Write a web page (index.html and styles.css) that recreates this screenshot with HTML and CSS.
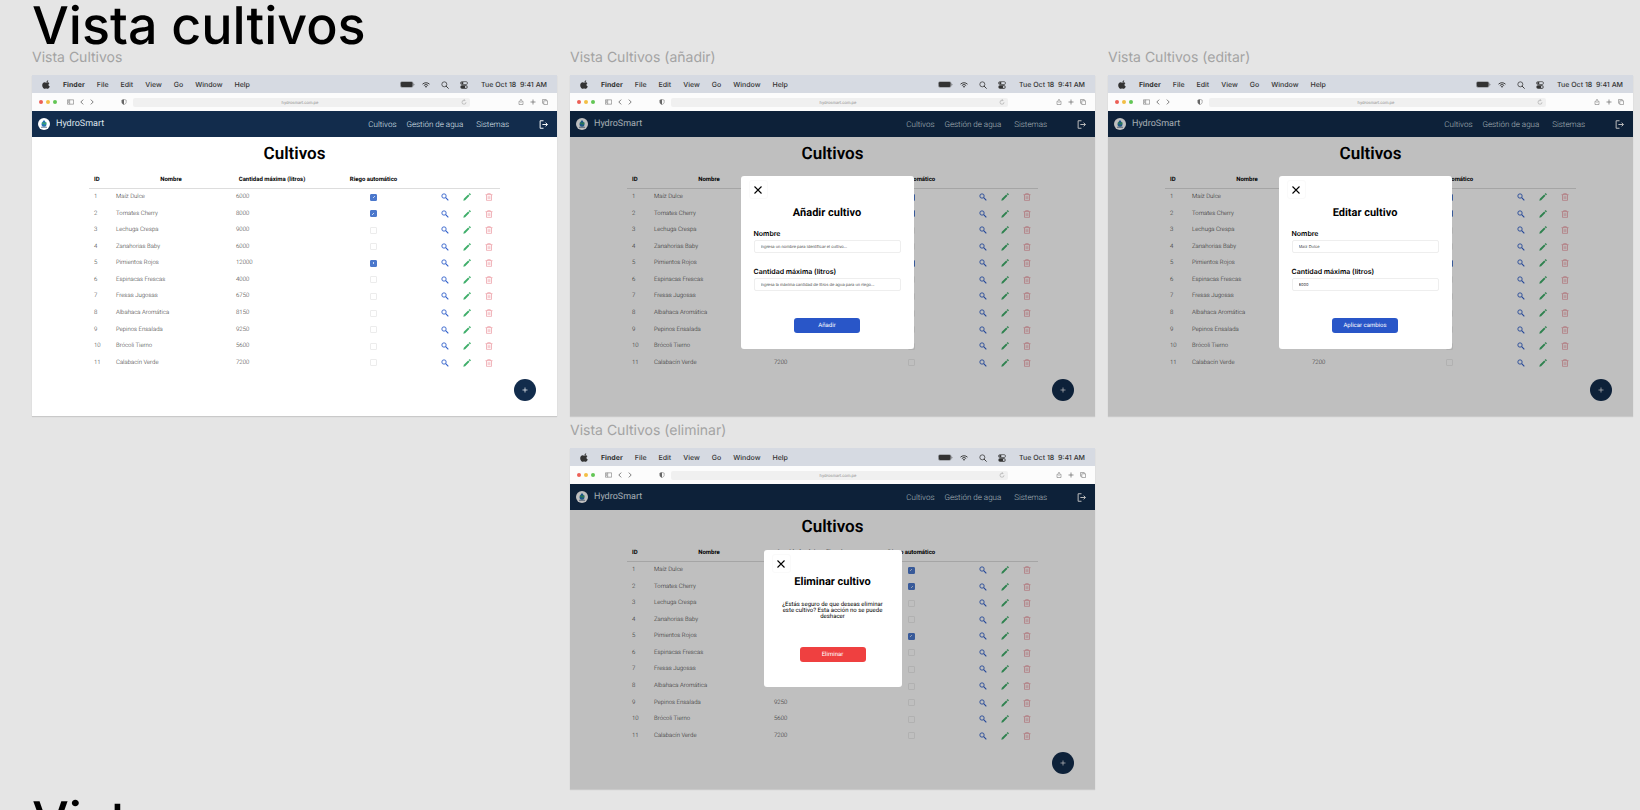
FILE: index.html
```html
<!DOCTYPE html>
<html lang="es">
<head>
<meta charset="utf-8">
<meta name="viewport" content="width=device-width, initial-scale=1">
<title>Vista cultivos</title>
<link rel="stylesheet" href="styles.css">
<script src="app.js" defer></script>
</head>
<body>
<svg class="sprite" aria-hidden="true">
  <symbol id="i-apple" viewBox="0 0 24 24"><path d="M16.500 .5c.2 1.600-.4 3-1.300 4-.9 1.100-2.200 1.800-3.500 1.700-.2-1.500.5-2.900 1.400-3.800 .9-1.100 2.300-1.800 3.400-1.900zM21 17.200c-.6 1.300-.9 1.900-1.600 3-1.100 1.600-2.500 3.300-4.300 3.300-1.600 0-2-1-4.200-1s-2.700 1-4.300 1c-1.800 0-3.100-1.700-4.200-3.300C0 16 .1 10.900 2.300 8.600c1.300-1.500 3-2.300 4.700-2.300 1.700 0 2.800 1 4.300 1 1.400 0 2.200-1 4.200-1 1.500 0 3.100.8 4.200 2.200-3.700 2-3.100 7.300 1.300 8.700z"/></symbol>
  <symbol id="i-battery" viewBox="0 0 28 12"><rect x=".7" y=".7" width="23.600" height="10.600" rx="3" fill="none" stroke="currentColor" stroke-opacity=".6"/><rect x="1.500" y="1.500" width="22" height="9" rx="2"/><path d="M25.500 4v4c1.600-.5 1.600-3.500 0-4z"/></symbol>
  <symbol id="i-wifi" viewBox="0 0 24 18"><path d="M1.500 6.500a15 15 0 0 1 21 0M5.500 10.500a9.300 9.300 0 0 1 13 0" fill="none" stroke="currentColor" stroke-width="2.800"/><path d="M12 17.500l-3.500-3.800a5 5 0 0 1 7 0z"/></symbol>
  <symbol id="i-find" viewBox="0 0 24 24"><circle cx="10" cy="10" r="7.500" fill="none" stroke="currentColor" stroke-width="2.200"/><path d="M15.500 15.500L22 22" stroke="currentColor" stroke-width="2.800" stroke-linecap="round"/></symbol>
  <symbol id="i-control" viewBox="0 0 24 24"><rect x="1.500" y="2" width="21" height="8.500" rx="4.200" fill="none" stroke="currentColor" stroke-width="2"/><circle cx="7" cy="6.200" r="3.500"/><rect x="1" y="13" width="22" height="10" rx="5"/><circle cx="17.500" cy="18" r="2.800" fill="#d6dae2"/></symbol>
  <symbol id="i-sidebar" viewBox="0 0 24 18"><path d="M1.500 1.500h21v15h-21zM9 1.500v15M4 5h3M4 8h3M4 11h3" fill="none" stroke="currentColor" stroke-width="1.800"/></symbol>
  <symbol id="i-back" viewBox="0 0 12 20"><path d="M10 2L2 10l8 8" fill="none" stroke="currentColor" stroke-width="2.800"/></symbol>
  <symbol id="i-next" viewBox="0 0 12 20"><path d="M2 2l8 8-8 8" fill="none" stroke="currentColor" stroke-width="2.800"/></symbol>
  <symbol id="i-shield" viewBox="0 0 20 22"><path d="M10 1.500L18 4v8c0 4-4 7-8 8.500C6 19 2 16 2 12V4z" fill="none" stroke="currentColor" stroke-width="1.800"/><path d="M10 1.500v19C6 19 2 16 2 12V4z"/></symbol>
  <symbol id="i-reload" viewBox="0 0 24 24"><path d="M20 13a8 8 0 1 1-8-8h3M12 1l4 4-4 4" fill="none" stroke="currentColor" stroke-width="1.800"/></symbol>
  <symbol id="i-share" viewBox="0 0 22 24"><path d="M7 9H3v13h16V9h-4M11 16V2M6.500 6L11 1.700 15.500 6" fill="none" stroke="currentColor" stroke-width="2"/></symbol>
  <symbol id="i-plus" viewBox="0 0 24 24"><path d="M12 2v20M2 12h20" stroke="currentColor" stroke-width="2.800"/></symbol>
  <symbol id="i-tabs" viewBox="0 0 24 24"><path d="M7 7h15v15H7zM7 17H2V2h15v5" fill="none" stroke="currentColor" stroke-width="2"/></symbol>
  <symbol id="i-logo" viewBox="0 0 24 24"><circle cx="12" cy="12" r="12" fill="#fff"/><path d="M12 4c3 4 5 6 5 8.500a5 5 0 0 1-10 0C7 10 9 8 12 4z" fill="#2674b5"/><path d="M12 13c0-3 2-5 5-4 .5 3-2 5-5 4zM12 12c0-2-2-4-4.500-3 0 2 2 4 4.500 3z" fill="#3aa56b"/><path d="M6 18.500h12" stroke="#1d3557" stroke-width="1.200"/></symbol>
  <symbol id="i-logout" viewBox="0 0 24 24"><path d="M12 2H3v20h9M9 12h13M17.500 7l5 5-5 5" fill="none" stroke="currentColor" stroke-width="2.600"/></symbol>
  <symbol id="i-search" viewBox="0 0 24 24"><circle cx="9" cy="9" r="6.500" fill="none" stroke="currentColor" stroke-width="2.600"/><path d="M14 14l8 8" stroke="currentColor" stroke-width="3.200"/></symbol>
  <symbol id="i-pencil" viewBox="0 0 24 24"><path d="M1 23l1.500-5.500L15.500 4.500 19.500 8.500 6.500 21.500zM17 3L19 .8c1.500-1.200 5.500 2.700 4.200 4.200L21 7z"/></symbol>
  <symbol id="i-trash" viewBox="0 0 24 24"><path d="M1.500 5h21M8 5V2h8v3M4.500 5.500V22h15V5.500M9.500 9.500v8.500M14.500 9.500v8.500" fill="none" stroke="currentColor" stroke-width="2.200"/></symbol>
  <symbol id="i-close" viewBox="0 0 16 16"><path d="M1 1l14 14M15 1L1 15" stroke="currentColor" stroke-width="2.200"/></symbol>
</svg>

<template id="screen">
  <div class="menubar">
    <svg class="ic ic-apple"><use href="#i-apple"/></svg>
    <b>Finder</b><span>File</span><span>Edit</span><span>View</span><span>Go</span><span>Window</span><span>Help</span>
    <div class="menubar-status">
      <svg class="ic ic-battery"><use href="#i-battery"/></svg>
      <svg class="ic ic-status"><use href="#i-wifi"/></svg>
      <svg class="ic ic-status"><use href="#i-find"/></svg>
      <svg class="ic ic-status"><use href="#i-control"/></svg>
      <time>Tue Oct 18&nbsp; 9:41 AM</time>
    </div>
  </div>
  <div class="browser">
    <div class="lights"><i class="red"></i><i class="yellow"></i><i class="green"></i></div>
    <div class="browser-nav">
      <svg class="ic ic-sidebar"><use href="#i-sidebar"/></svg>
      <svg class="ic ic-arrow"><use href="#i-back"/></svg>
      <svg class="ic ic-arrow"><use href="#i-next"/></svg>
    </div>
    <svg class="ic ic-shield"><use href="#i-shield"/></svg>
    <div class="url"><span>hydrosmart.com.pe</span><svg class="ic ic-tool"><use href="#i-reload"/></svg></div>
    <div class="browser-tools">
      <svg class="ic ic-tool"><use href="#i-share"/></svg>
      <svg class="ic ic-tool"><use href="#i-plus"/></svg>
      <svg class="ic ic-tool"><use href="#i-tabs"/></svg>
    </div>
  </div>
  <div class="app">
    <header class="navbar">
      <svg class="logo"><use href="#i-logo"/></svg>
      <span class="brand">HydroSmart</span>
      <nav class="links">
        <a href="#">Cultivos</a>
        <a href="#">Gestión de agua</a>
        <a href="#" class="link-last">Sistemas</a>
      </nav>
      <button class="logout" type="button" aria-label="Cerrar sesión"><svg class="ic ic-logout"><use href="#i-logout"/></svg></button>
    </header>
    <main class="page">
      <h3 class="page-title">Cultivos</h3>
      <table class="crops">
        <colgroup><col class="c-id"><col class="c-name"><col class="c-max"><col><col class="c-act"><col class="c-act"><col class="c-act"></colgroup>
        <thead><tr><th class="left">ID</th><th>Nombre</th><th>Cantidad máxima (litros)</th><th>Riego automático</th><th></th><th></th><th></th></tr></thead>
        <tbody></tbody>
      </table>
    </main>
    <button class="fab" type="button" aria-label="Añadir cultivo"><svg class="ic ic-fab"><use href="#i-plus"/></svg></button>
  </div>
</template>

<div class="canvas">
  <h1 class="section-title">Vista cultivos</h1>
  <div class="board">
    <section class="view">
      <h2 class="view-label">Vista Cultivos</h2>
      <div class="frame"></div>
    </section>

    <section class="view">
      <h2 class="view-label">Vista Cultivos (añadir)</h2>
      <div class="frame dimmed">
        <form class="modal modal-form">
          <button class="close" type="button" aria-label="Cerrar"><svg class="ic ic-close"><use href="#i-close"/></svg></button>
          <h3 class="modal-title">Añadir cultivo</h3>
          <label for="add-name">Nombre</label>
          <input id="add-name" type="text" placeholder="Ingresa un nombre para identificar el cultivo...">
          <label for="add-max">Cantidad máxima (litros)</label>
          <input id="add-max" type="text" placeholder="Ingresa la máxima cantidad de litros de agua para un riego...">
          <button class="action" type="button">Añadir</button>
        </form>
      </div>
    </section>

    <section class="view">
      <h2 class="view-label">Vista Cultivos (editar)</h2>
      <div class="frame dimmed">
        <form class="modal modal-form">
          <button class="close" type="button" aria-label="Cerrar"><svg class="ic ic-close"><use href="#i-close"/></svg></button>
          <h3 class="modal-title">Editar cultivo</h3>
          <label for="edit-name">Nombre</label>
          <input id="edit-name" type="text" value="Maíz Dulce">
          <label for="edit-max">Cantidad máxima (litros)</label>
          <input id="edit-max" type="text" value="6000">
          <button class="action" type="button">Aplicar cambios</button>
        </form>
      </div>
    </section>

    <section class="view view-second">
      <h2 class="view-label">Vista Cultivos (eliminar)</h2>
      <div class="frame dimmed">
        <div class="modal modal-delete" role="dialog" aria-label="Eliminar cultivo">
          <button class="close" type="button" aria-label="Cerrar"><svg class="ic ic-close"><use href="#i-close"/></svg></button>
          <h3 class="modal-title">Eliminar cultivo</h3>
          <p class="modal-text">¿Estás seguro de que deseas eliminar este cultivo? Esta acción no se puede deshacer</p>
          <button class="action danger" type="button">Eliminar</button>
        </div>
      </div>
    </section>
  </div>
  <h1 class="section-title">Vista</h1>
</div>
</body>
</html>
```
FILE: styles.css
```css
* { box-sizing: border-box; }

body {
  margin: 0;
  background: #e5e5e5;
  color: #000;
  font-family: Roboto, "Liberation Sans", sans-serif;
  text-rendering: geometricPrecision;
}

h1, h2, h3, p { margin: 0; }

button { padding: 0; border: 0; background: none; font: inherit; color: inherit; cursor: pointer; }

.sprite { display: none; }

.canvas { height: 100vh; padding: 0 7px 0 32px; overflow: hidden; }

.section-title {
  height: 50px;
  font: 500 52px/52px Inter, sans-serif;
}

.board {
  display: grid;
  grid-template-columns: repeat(3, 1fr);
  gap: 7px 13px;
  margin-bottom: 6px;
}

.view-second { grid-column: 2; }

.view-label {
  height: 25px;
  color: #a3a3a3;
  font: 400 14px/16px Inter, sans-serif;
}

.frame {
  position: relative;
  background: #fff;
  box-shadow: 0 1px 1px rgba(0, 0, 0, .12);
}

.ic { display: block; flex: none; width: 8px; height: 8px; fill: currentColor; }

/* macOS menu bar */
.menubar {
  display: flex;
  align-items: center;
  gap: 12px;
  height: 18px;
  padding: 1px 10px 0;
  background: #d6dae2;
  color: #333;
  font: 500 7px/17px Inter, sans-serif;
}
.menubar b { font-weight: 700; }
.menubar-status { display: flex; align-items: center; gap: 11px; margin-left: auto; }
.menubar-status time { margin-left: 2px; }
.ic-apple { width: 9px; height: 9px; }
.ic-battery { width: 15px; height: 7px; margin-right: -4px; }

/* Browser toolbar */
.browser {
  display: flex;
  align-items: center;
  height: 18px;
  padding: 0 9px 0 7px;
  background: #fcfcfc;
  color: #666;
}
.lights { display: flex; gap: 3px; }
.lights i { width: 4px; height: 4px; border-radius: 50%; }
.lights .red { background: #ec5f56; }
.lights .yellow { background: #f2bf45; }
.lights .green { background: #62c655; }
.browser-nav { display: flex; align-items: center; gap: 6px; margin-left: 10px; }
.ic-tool { width: 6px; height: 6px; }
.ic-sidebar { width: 7px; height: 6px; }
.ic-arrow { width: 4px; height: 6px; }
.ic-shield { width: 6px; height: 6px; margin: 0 6px 0 27px; }
.url {
  display: flex;
  align-items: center;
  flex: 1;
  height: 9px;
  padding: 0 3px 0 6px;
  border-radius: 2px;
  background: #f0f0f0;
  color: #8a8a8a;
  font: 400 4px/9px Inter, sans-serif;
}
.url span { flex: 1; text-align: center; }
.browser-tools { display: flex; gap: 6px; margin-left: 48px; }

/* App */
.app { position: relative; }
.dimmed .app::after { content: ""; position: absolute; inset: 0; background: rgba(0, 0, 0, .25); }

.navbar {
  display: flex;
  align-items: center;
  height: 26px;
  padding: 0 9px 0 6px;
  background: #122c4c;
  color: #dfe5ec;
}
.logo { width: 12px; height: 12px; }
.brand { margin-left: 6px; font-size: 9px; line-height: 12px; }
.links { display: flex; gap: 10px; margin-left: auto; font-size: 8px; font-weight: 300; }
.links a { color: inherit; text-decoration: none; }
.link-last { margin-left: 3px; }
.logout { margin-left: 30px; color: #fff; }
.ic-logout { width: 9px; height: 9px; }

.page { height: 279px; padding: 8px 57px 0; }
.page-title { font-size: 17px; line-height: 18px; font-weight: 600; text-align: center; }

.crops {
  width: 100%;
  height: 201px;
  margin-top: 7px;
  table-layout: fixed;
  border-collapse: collapse;
  font-size: 6px;
  line-height: 8px;
}
.c-id { width: 22px; }
.c-name { width: 120px; }
.c-max { width: 82px; }
.c-act { width: 22px; }
.crops th { height: 18px; padding: 3px 0 0; border-bottom: 1px solid #ddd; font-weight: 700; text-align: center; white-space: nowrap; }
.crops .left { padding-left: 5px; text-align: left; }
.crops td { padding: 0 0 0 5px; color: #333; font-weight: 300; }
.crops td.mid { padding: 0; }
.crops input {
  display: block;
  width: 7px;
  height: 7px;
  margin: 0 auto;
  appearance: none;
  border: 1px solid #ececec;
  border-radius: 1px;
  background: transparent;
}
.crops input:checked {
  border-color: #4b78cc;
  background: #4b78cc linear-gradient(135deg, transparent 40%, #c7d5f0 40% 60%, transparent 60%) center / 3px 2px no-repeat;
}
.crops button { display: block; margin: 0 auto; }
.crops .ic { width: 8px; height: 8px; }
.view-row { color: #2b5bc9; }
.edit-row { color: #3fae6a; }
.delete-row { color: #ec9ca4; }

.fab {
  position: absolute;
  right: 21px;
  bottom: 15px;
  display: grid;
  place-items: center;
  width: 22px;
  height: 22px;
  border-radius: 50%;
  background: #122c4c;
  color: #fff;
}
.ic-fab { width: 6px; height: 6px; }

/* Dialogs */
.modal {
  position: absolute;
  display: flex;
  flex-direction: column;
  border-radius: 3px;
  background: #fff;
}
.modal-form { top: 101px; left: calc(50% - 92px); width: 173px; padding: 4px 13px 16px; }
.modal-delete { top: 102px; left: calc(50% - 69px); width: 138px; padding: 4px 13px 25px; }

.close {
  display: grid;
  place-items: center;
  width: 19px;
  height: 19px;
  margin-left: -5px;
  border: 1px solid #fafafa;
  border-radius: 3px;
}
.modal-title { font-size: 11px; line-height: 13px; font-weight: 700; text-align: center; }
.modal-form .modal-title { margin: 7px 0 10px; }
.modal-delete .modal-title { margin: 2px 0 14px; }

.modal label { font: 600 7px/10px Inter, sans-serif; }
.modal input {
  height: 13px;
  margin: 1px 0 14px;
  padding: 0 6px;
  border: 1px solid #eee;
  border-radius: 2px;
  background: #fff;
  color: #444;
  font: 400 4px/11px Inter, sans-serif;
  text-rendering: inherit;
}
.modal input::placeholder { color: #444; opacity: 1; }
.modal-text { font-size: 6px; line-height: 6px; text-align: center; }

.action {
  align-self: center;
  width: 66px;
  height: 15px;
  margin-top: 13px;
  border-radius: 3px;
  background: #2956c8;
  color: #fff;
  font-size: 6px;
  line-height: 15px;
  text-rendering: inherit;
}
.modal-delete .action { margin-top: 27px; }
.danger { background: #ef4040; }
```
FILE: app.js
```js
const crops = [
  ["Maíz Dulce", 6000, true],
  ["Tomates Cherry", 8000, true],
  ["Lechuga Crespa", 9000, false],
  ["Zanahorias Baby", 6000, false],
  ["Pimientos Rojos", 12000, true],
  ["Espinacas Frescas", 4000, false],
  ["Fresas Jugosas", 6750, false],
  ["Albahaca Aromática", 8150, false],
  ["Pepinos Ensalada", 9250, false],
  ["Brócoli Tierno", 5600, false],
  ["Calabacín Verde", 7200, false]
];

const action = (cls, label, icon) =>
  `<td class="mid"><button class="${cls}" type="button" aria-label="${label}"><svg class="ic"><use href="#${icon}"/></svg></button></td>`;

const rows = crops.map(([name, max, auto], i) => `
  <tr>
    <td>${i + 1}</td><td>${name}</td><td>${max}</td>
    <td class="mid"><input type="checkbox" aria-label="Riego automático: ${name}"${auto ? " checked" : ""}></td>
    ${action("view-row", "Ver " + name, "i-search")}
    ${action("edit-row", "Editar " + name, "i-pencil")}
    ${action("delete-row", "Eliminar " + name, "i-trash")}
  </tr>`).join("");

const screenTemplate = document.getElementById("screen");
document.querySelectorAll(".frame").forEach((frame) => {
  const screen = screenTemplate.content.cloneNode(true);
  screen.querySelector("tbody").innerHTML = rows;
  frame.prepend(screen);
});
```
